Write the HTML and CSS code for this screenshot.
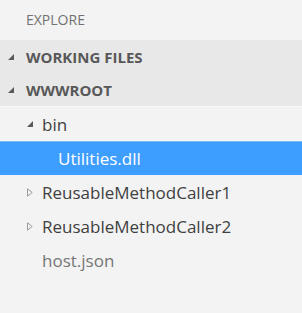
FILE: index.html
```html
<!DOCTYPE html>
<html lang="en">
<head>
    <meta charset="UTF-8">
    <title>Explore</title>
    <link rel="stylesheet" href="styles.css">
</head>
<body>
    <div class="sidebar">
        <div class="title">EXPLORE</div>
        <div class="sections">
            <div class="section">
                <svg class="twisty" width="6" height="6" viewBox="0 0 6 6"><path d="M6 0 L6 6 L0 6 Z" fill="#5a5a5a"/></svg>
                <span>WORKING FILES</span>
            </div>
            <div class="section">
                <svg class="twisty" width="6" height="6" viewBox="0 0 6 6"><path d="M6 0 L6 6 L0 6 Z" fill="#5a5a5a"/></svg>
                <span>WWWROOT</span>
            </div>
        </div>
        <ul class="tree">
            <li class="item folder">
                <svg class="twisty" width="6" height="6" viewBox="0 0 6 6"><path d="M6 0 L6 6 L0 6 Z" fill="#5a5a5a"/></svg>
                <span>bin</span>
            </li>
            <li class="item file active"><span>Utilities.dll</span></li>
            <li class="item folder">
                <svg class="twisty" width="6" height="9" viewBox="0 0 6 9"><path d="M0.5 0.8 L5.2 4.5 L0.5 8.2 Z" fill="none" stroke="#9a9a9a" stroke-width="1"/></svg>
                <span>ReusableMethodCaller1</span>
            </li>
            <li class="item folder">
                <svg class="twisty" width="6" height="9" viewBox="0 0 6 9"><path d="M0.5 0.8 L5.2 4.5 L0.5 8.2 Z" fill="none" stroke="#9a9a9a" stroke-width="1"/></svg>
                <span>ReusableMethodCaller2</span>
            </li>
            <li class="item plain"><span>host.json</span></li>
        </ul>
    </div>
</body>
</html>
```

FILE: styles.css
```css
* {
    margin: 0;
    padding: 0;
    list-style: none;
}
body {
    background: #f3f3f3;
    font-family: "Open Sans", "Noto Sans", sans-serif;
}
.sidebar {
    width: 302px;
    height: 313px;
}
.title {
    height: 40px;
    line-height: 40px;
    padding-left: 26px;
    font-size: 14px;
    color: #717171;
}
.sections {
    background: #e8e8e8;
    border-bottom: 1px solid #f8f8f8;
}
.section {
    height: 33px;
    display: flex;
    align-items: center;
    padding-left: 8px;
    font-size: 15px;
    font-weight: bold;
    color: #585858;
}
.section .twisty {
    margin-right: 12px;
}
.item {
    height: 34px;
    display: flex;
    align-items: center;
    font-size: 17px;
    color: #3f3f3f;
}
.item.folder {
    padding-left: 27px;
}
.item .twisty {
    margin-right: 9px;
}
.item.file {
    padding-left: 58px;
}
.item.plain {
    padding-left: 42px;
    color: #767676;
}
.item.active {
    background: #3e9eff;
    border-top: 1px solid #7ab9fa;
    height: 33px;
    color: #fff;
}
```
